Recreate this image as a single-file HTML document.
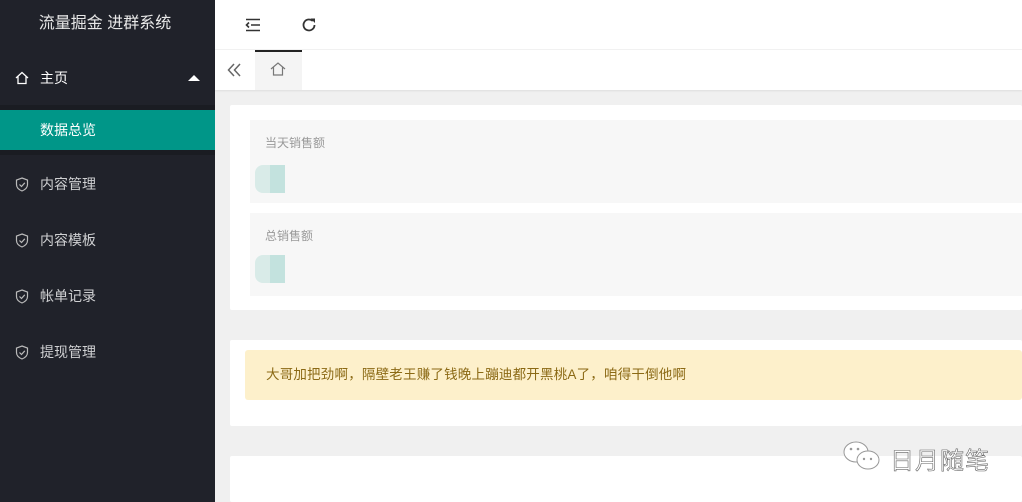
<!DOCTYPE html>
<html><head><meta charset="utf-8"><style>
*{margin:0;padding:0;box-sizing:border-box}
body{width:1022px;height:502px;overflow:hidden;background:#f0f0f0;font-family:"Liberation Sans","Noto Sans CJK SC",sans-serif;position:relative}
.side{position:absolute;left:0;top:0;width:215px;height:502px;background:#20222a}
.title{position:absolute;left:0;width:210px;top:13px;text-align:center;color:#e8e8e8;font-size:16px;line-height:22px}
.item{position:absolute;left:0;width:215px;color:#cfd0d2;font-size:14px}
.item span{position:absolute;left:40px}
.item svg{position:absolute;left:15px}
.top{position:absolute;left:215px;top:0;right:0;height:50px;background:#fff;border-bottom:1px solid #f2f2f2}
.tabs{position:absolute;left:215px;top:50px;right:0;height:40px;background:#fff;box-shadow:0 1px 2px rgba(0,0,0,.08)}
.card{position:absolute;left:230px;right:0;background:#fff;border-radius:2px}
.box{position:absolute;left:250px;right:0;background:#f7f7f7}
.lbl{position:absolute;left:15px;top:14px;font-size:12px;color:#999}
.ic{position:absolute;left:5px;width:30px;height:28px;border-radius:8px 0 0 8px;overflow:hidden}
</style></head><body>
<div class="side">
<div class="title">流量掘金 进群系统</div>
<div class="item" style="top:68px;color:#fff">
<svg width="14" height="14" viewBox="0 0 14 14" style="top:3px"><path d="M1 7 L7 1.5 L13 7 M3 5.5 V12.5 H11 V5.5" fill="none" stroke="#fff" stroke-width="1.3"/></svg>
<span style="line-height:20px">主页</span>
<svg width="12" height="8" viewBox="0 0 12 8" style="left:188px;top:6px"><path d="M0 7 L6 1 L12 7Z" fill="#fff"/></svg></div>
<div style="position:absolute;top:105px;width:215px;height:50px;background:#1a1c22"></div>
<div style="position:absolute;top:110px;width:215px;height:40px;background:#009688"></div>
<div class="item" style="top:120px;color:#fff"><span style="line-height:20px">数据总览</span></div>
<div class="item" style="top:174px"><svg width="14" height="15" viewBox="0 0 14 15" style="top:3px"><path d="M7 1 L12.5 3 V7.5 C12.5 11 9.5 13 7 14 C4.5 13 1.5 11 1.5 7.5 V3Z M4.5 7.5 L6.5 9.5 L9.8 5.8" fill="none" stroke="#bbb" stroke-width="1.2"/></svg><span style="line-height:20px">内容管理</span></div>
<div class="item" style="top:230px"><svg width="14" height="15" viewBox="0 0 14 15" style="top:3px"><path d="M7 1 L12.5 3 V7.5 C12.5 11 9.5 13 7 14 C4.5 13 1.5 11 1.5 7.5 V3Z M4.5 7.5 L6.5 9.5 L9.8 5.8" fill="none" stroke="#bbb" stroke-width="1.2"/></svg><span style="line-height:20px">内容模板</span></div>
<div class="item" style="top:286px"><svg width="14" height="15" viewBox="0 0 14 15" style="top:3px"><path d="M7 1 L12.5 3 V7.5 C12.5 11 9.5 13 7 14 C4.5 13 1.5 11 1.5 7.5 V3Z M4.5 7.5 L6.5 9.5 L9.8 5.8" fill="none" stroke="#bbb" stroke-width="1.2"/></svg><span style="line-height:20px">帐单记录</span></div>
<div class="item" style="top:342px"><svg width="14" height="15" viewBox="0 0 14 15" style="top:3px"><path d="M7 1 L12.5 3 V7.5 C12.5 11 9.5 13 7 14 C4.5 13 1.5 11 1.5 7.5 V3Z M4.5 7.5 L6.5 9.5 L9.8 5.8" fill="none" stroke="#bbb" stroke-width="1.2"/></svg><span style="line-height:20px">提现管理</span></div>
</div>
<div class="top">
<svg width="16" height="14" viewBox="0 0 16 14" style="position:absolute;left:30px;top:18px"><path d="M1 1.5H15M6 7H15M1 12.5H15M4 4.5L1.5 7L4 9.5" fill="none" stroke="#333" stroke-width="1.6"/></svg>
<svg width="16" height="16" viewBox="0 0 16 16" style="position:absolute;left:86px;top:17px"><path d="M13.5 8A5.5 5.5 0 1 1 11.8 4" fill="none" stroke="#333" stroke-width="1.8"/><path d="M9.5 1.5H14V6Z" fill="#333"/></svg>
</div>
<div class="tabs">
<svg width="16" height="14" viewBox="0 0 16 14" style="position:absolute;left:12px;top:13px"><path d="M7 1L1.5 7L7 13M13 1L7.5 7L13 13" fill="none" stroke="#666" stroke-width="1.5"/></svg>
<div style="position:absolute;left:40px;top:0;width:47px;height:40px;background:#f4f4f4;border-top:2px solid #222"></div>
<svg width="16" height="14" viewBox="0 0 16 14" style="position:absolute;left:55px;top:12px"><path d="M1 7L8 1L15 7M3.5 5V13H12.5V5" fill="none" stroke="#777" stroke-width="1.2"/></svg>
</div>
<div class="card" style="top:105px;height:205px"></div>
<div class="box" style="top:120px;height:83px"><div class="lbl">当天销售额</div><div class="ic" style="top:45px;background:linear-gradient(90deg,#d9ebe8 50%,#c3e2de 50%)"></div></div>
<div class="box" style="top:213px;height:83px"><div class="lbl">总销售额</div><div class="ic" style="top:42px;background:linear-gradient(90deg,#d9ebe8 50%,#c3e2de 50%)"></div></div>
<div class="card" style="top:340px;height:86px"></div>
<div style="position:absolute;left:245px;right:0;top:350px;height:50px;background:#fdf0cb;border-radius:3px;color:#8b6914;font-size:13.5px;letter-spacing:0.2px;line-height:50px;padding-left:21px">大哥加把劲啊，隔壁老王赚了钱晚上蹦迪都开黑桃A了，咱得干倒他啊</div>
<div class="card" style="top:456px;height:46px"></div>
<svg width="42" height="32" viewBox="0 0 42 32" style="position:absolute;left:842px;top:440px"><ellipse cx="14" cy="12" rx="12" ry="10" fill="#fff" stroke="#999" stroke-width="1"/><ellipse cx="26" cy="20" rx="11" ry="9" fill="#fff" stroke="#999" stroke-width="1"/><circle cx="9" cy="9" r="1.3" fill="#999"/><circle cx="16" cy="9" r="1.3" fill="#999"/><circle cx="22" cy="19" r="1.2" fill="#999"/><circle cx="29" cy="19" r="1.2" fill="#999"/></svg>
<div style="position:absolute;left:890px;top:441px;font-size:24px;color:#fff;-webkit-text-stroke:0.6px #666;letter-spacing:1px">日月随笔</div>
</body></html>
